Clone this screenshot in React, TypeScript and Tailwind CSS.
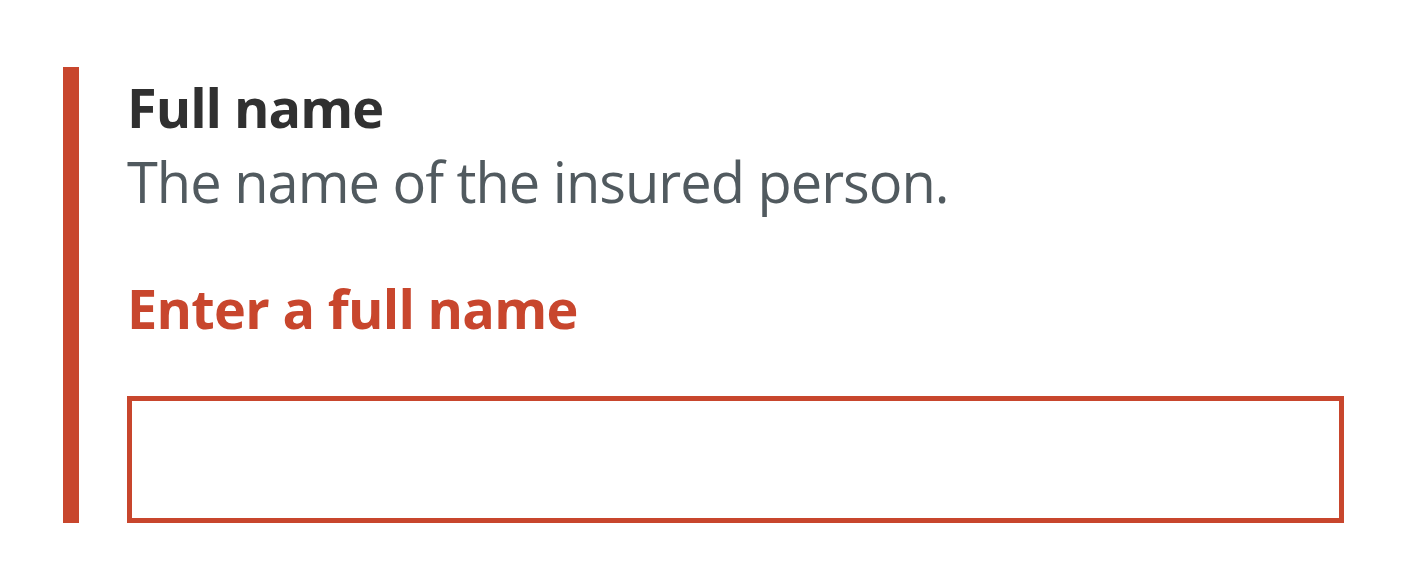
export default function App() {
  return (
    <div className="w-[1418px] h-[582px] bg-white pt-[67px] pl-[63px]" style={{ fontFamily: '"Open Sans", "Noto Sans", sans-serif' }}>
      <div className="border-l-[16px] border-[#c8462d] pl-[48px] w-[1281px] flex flex-col">
        <div className="text-[54px] leading-[80px] font-bold text-[#303030] tracking-[-1px]">Full name</div>
        <div className="text-[56px] leading-[68px] text-[#515a5f] tracking-[-1px]">The name of the insured person.</div>
        <div className="mt-[63px] text-[54px] leading-[60px] font-bold text-[#c8462d] tracking-[-0.7px]">Enter a full name</div>
        <div className="mt-[58px] h-[127px] w-[1217px] border-[5px] border-[#c8462d] bg-white"></div>
      </div>
    </div>
  );
}
